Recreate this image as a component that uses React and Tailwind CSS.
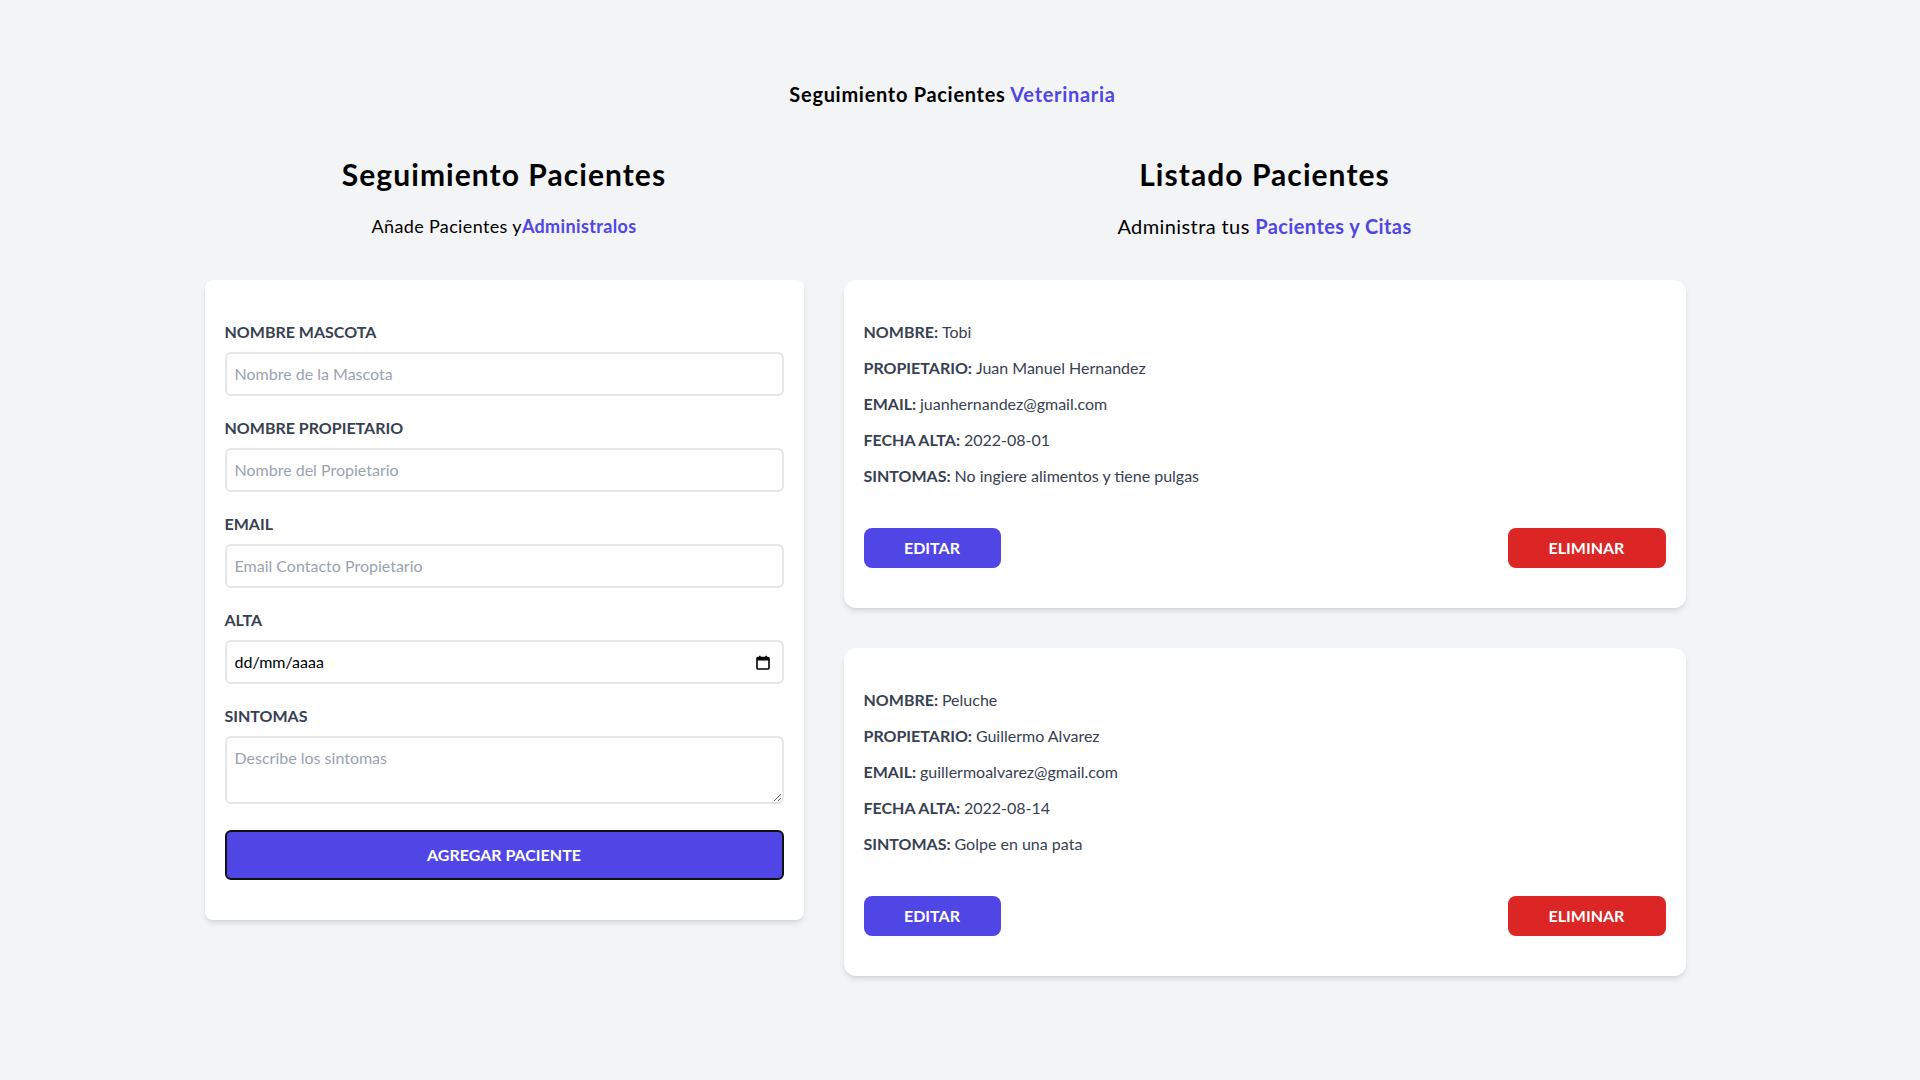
import React from 'react'

const pacientes = [
  {
    id: 1,
    nombre: 'Tobi',
    propietario: 'Juan Manuel Hernandez',
    email: 'juanhernandez@gmail.com',
    fecha: '2022-08-01',
    sintomas: 'No ingiere alimentos y tiene pulgas',
  },
  {
    id: 2,
    nombre: 'Peluche',
    propietario: 'Guillermo Alvarez',
    email: 'guillermoalvarez@gmail.com',
    fecha: '2022-08-14',
    sintomas: 'Golpe en una pata',
  },
]

const inputClass =
  'mt-2 w-full rounded-md border-2 border-[#e5e7eb] p-2 text-base text-black placeholder:text-[#9ca3af] focus:outline-none'

const Campo = ({ label, children }) => (
  <div className="mb-5">
    <label className="block font-bold uppercase text-[#374151]">{label}</label>
    {children}
  </div>
)

const CalendarIcon = () => (
  <svg width="14" height="15" viewBox="0 0 14 15" fill="none">
    <rect x="1" y="2.5" width="12" height="11.5" rx="1" stroke="#000" strokeWidth="1.6" />
    <rect x="1" y="2.5" width="12" height="3" fill="#000" />
    <rect x="3" y="0.8" width="1.6" height="2" fill="#000" />
    <rect x="9.4" y="0.8" width="1.6" height="2" fill="#000" />
  </svg>
)

const Formulario = () => (
  <form className="mx-5 mt-10 rounded-lg bg-white px-5 py-10 shadow-md">
    <Campo label="Nombre Mascota">
      <input type="text" className={inputClass} placeholder="Nombre de la Mascota" />
    </Campo>
    <Campo label="Nombre Propietario">
      <input type="text" className={inputClass} placeholder="Nombre del Propietario" />
    </Campo>
    <Campo label="Email">
      <input type="email" className={inputClass} placeholder="Email Contacto Propietario" />
    </Campo>
    <Campo label="Alta">
      <div className="mt-2 flex w-full items-center rounded-md border-2 border-[#e5e7eb] p-2">
        <input
          type="text"
          defaultValue="dd/mm/aaaa"
          className="flex-1 text-base text-black focus:outline-none"
        />
        <span className="mr-1 flex items-center">
          <CalendarIcon />
        </span>
      </div>
    </Campo>
    <Campo label="Sintomas">
      <textarea className={inputClass} placeholder="Describe los sintomas" rows={2} />
    </Campo>
    <button
      type="submit"
      className="h-[50px] w-full rounded-md border-2 border-[#111111] bg-[#4f46e5] font-bold uppercase text-white"
    >
      Agregar Paciente
    </button>
  </form>
)

const Dato = ({ label, value }) => (
  <p className="mb-3 font-bold uppercase text-[#374151]">
    {label}: <span className="font-normal normal-case">{value}</span>
  </p>
)

const Paciente = ({ paciente }) => (
  <div className="mx-5 mb-10 rounded-xl bg-white px-5 py-10 shadow-md">
    <Dato label="Nombre" value={paciente.nombre} />
    <Dato label="Propietario" value={paciente.propietario} />
    <Dato label="Email" value={paciente.email} />
    <Dato label="Fecha Alta" value={paciente.fecha} />
    <Dato label="Sintomas" value={paciente.sintomas} />
    <div className="mt-10 flex justify-between">
      <button className="w-[137px] rounded-lg bg-[#4f46e5] py-2 font-bold uppercase text-white">
        Editar
      </button>
      <button className="w-[158px] rounded-lg bg-[#dc2626] py-2 font-bold uppercase text-white">
        Eliminar
      </button>
    </div>
  </div>
)

export default function App() {
  return (
    // pr-[15px]: room the page scrollbar takes
    <div className="h-screen overflow-y-scroll bg-[#f3f4f6] pr-[15px] font-['Lato','Noto_Sans',sans-serif] text-black">
      <h1 className="pt-20 text-center text-xl font-bold tracking-[0.035em]">
        Seguimiento Pacientes <span className="text-[#4f46e5]">Veterinaria</span>
      </h1>

      <div className="mx-auto mt-12 flex w-[1536px]">
        <div className="w-[639px] shrink-0">
          <h2 className="text-center text-3xl font-bold tracking-[0.035em]">Seguimiento Pacientes</h2>
          <p className="mt-5 text-center text-lg tracking-[0.02em]">
            Añade Pacientes y<span className="font-bold text-[#4f46e5]">Administralos</span>
          </p>
          <Formulario />
        </div>

        <div className="h-screen flex-1 overflow-y-scroll pr-[15px]">
          <h2 className="text-center text-3xl font-bold tracking-[0.035em]">Listado Pacientes</h2>
          <p className="mb-10 mt-5 text-center text-xl tracking-[0.02em]">
            Administra tus <span className="font-bold text-[#4f46e5]">Pacientes y Citas</span>
          </p>
          {pacientes.map((p) => (
            <Paciente key={p.id} paciente={p} />
          ))}
        </div>
      </div>
    </div>
  )
}
